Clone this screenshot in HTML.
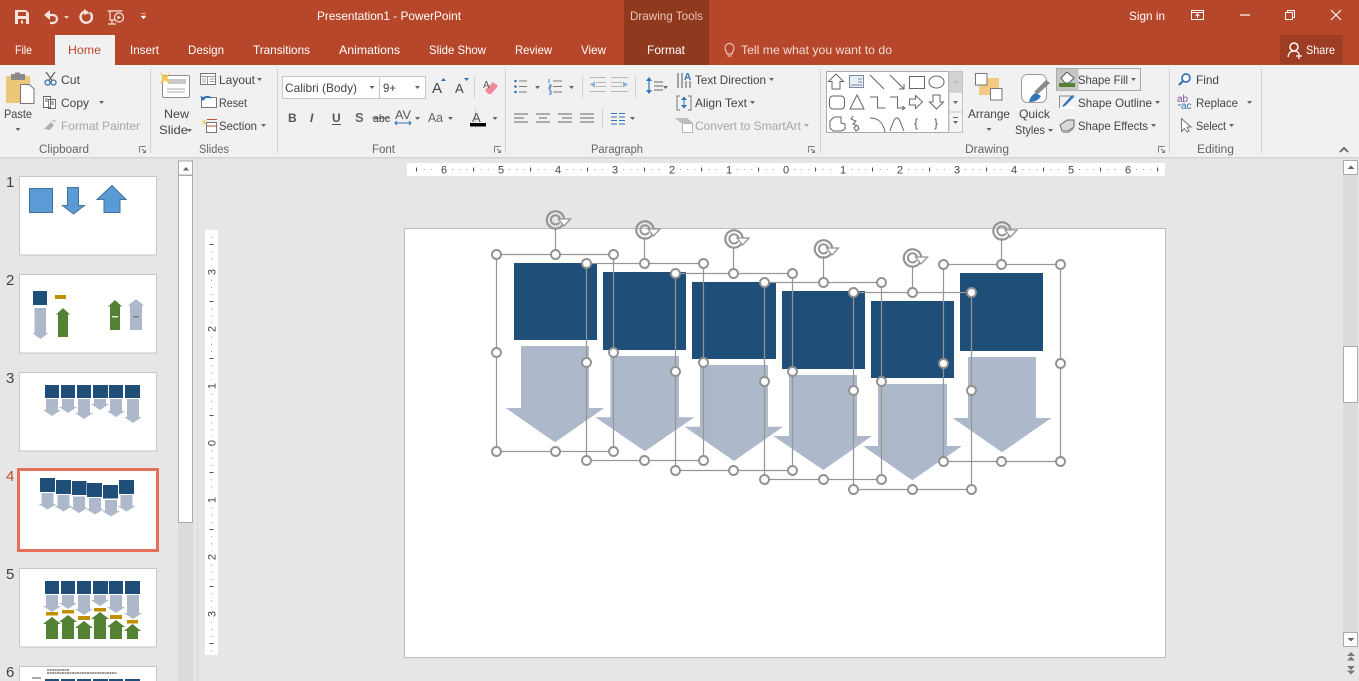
<!DOCTYPE html>
<html><head><meta charset="utf-8"><title>PowerPoint</title>
<style>
html,body{margin:0;padding:0;width:1359px;height:681px;overflow:hidden;background:#e6e6e6}
svg{display:block}
text{font-family:"Liberation Sans",sans-serif;font-size:12px;fill:#444}
.w text,text.w{fill:#fff}
.g{fill:#666;font-size:11.5px}
.d{fill:#a6a6a6}
.h{fill:#fff;stroke:#919191;stroke-width:1.9}
.b{fill:none;stroke:#959595;stroke-width:1.2}
.s{fill:none;stroke:#666;stroke-width:1}
.r{fill:#1f4e79}
.a{fill:#adb9ca}
.sep{stroke:#d2d2d2;stroke-width:1}
.ln{stroke:#666;stroke-width:1}
</style></head><body>
<svg width="1359" height="681" viewBox="0 0 1359 681" xmlns="http://www.w3.org/2000/svg">
<defs>
<path id="c" d="M0 0h5l-2.500 3z" fill="#666"/>
<g id="rh" fill="none" stroke="#959595">
<path d="M7.300 4.700A8.700 8.700 0 1 1 8.600 -1.500" stroke-width="2.200"/>
<path d="M3.900 2.300A4.600 4.600 0 1 1 4.400 -1.500" stroke-width="2"/>
<path d="M3 -1L15 -1L8.500 6Z" fill="#fff" stroke-width="1.300"/>
</g>
</defs>

<!-- backgrounds -->
<rect width="1359" height="681" fill="#e6e6e6"/>
<rect width="1359" height="65" fill="#b7472a"/>
<rect x="624" width="85" height="65" fill="#8f3a1f"/>
<rect x="55" y="35" width="60" height="30" fill="#f1f1f1"/>
<rect x="1280" y="35" width="63" height="29" fill="#9c3d24"/>
<rect y="65" width="1359" height="92" fill="#f1f1f1"/>
<rect y="157" width="1359" height="1.500" fill="#d4d4d4"/>

<!-- QAT -->
<path d="M15 10h11l3 3v11H15zM18 12v4h8v-4zM18 19v5h8v-5z" fill="#f6e4de" fill-rule="evenodd"/>
<rect x="21" y="20.500" width="2" height="3" fill="#f6e4de"/>
<g fill="none" stroke="#f6e4de" stroke-width="1.700">
<path d="M47 15h6a4 4 0 0 1 0 8h-3" stroke-width="2.200"/>
<path d="M90 12.800a5.700 5.700 0 1 1-5-1.300" stroke-width="2.400"/>
<path d="M107.500 11h15M110 11v9h4.500M116 24h-8M112 20.500v3.500" stroke-width="1.200"/>
<circle cx="119" cy="17.500" r="4.500" stroke-width="1.200"/>
</g>
<path d="M50 10L44 15L50 20z" fill="#f6e4de"/>
<path d="M84 9L90 13L84 15z" fill="#f6e4de"/>
<path d="M117.500 15.500l3.500 2-3.500 2z" fill="#f6e4de"/>
<path d="M64 16h5l-2.500 3z" fill="#eecfc5"/>
<path d="M141 13.500h5M141 16h5l-2.500 3z" fill="#fff" stroke="#fff" stroke-width=".5"/>

<!-- title text -->
<g class="w">
<text x="317" y="20" textLength="144" lengthAdjust="spacingAndGlyphs">Presentation1 - PowerPoint</text>
<text x="15" y="54" textLength="17" lengthAdjust="spacingAndGlyphs">File</text>
<text x="130" y="54" textLength="29" lengthAdjust="spacingAndGlyphs">Insert</text>
<text x="188" y="54" textLength="36" lengthAdjust="spacingAndGlyphs">Design</text>
<text x="253" y="54" textLength="57" lengthAdjust="spacingAndGlyphs">Transitions</text>
<text x="339" y="54" textLength="61" lengthAdjust="spacingAndGlyphs">Animations</text>
<text x="429" y="54" textLength="57" lengthAdjust="spacingAndGlyphs">Slide Show</text>
<text x="515" y="54" textLength="37" lengthAdjust="spacingAndGlyphs">Review</text>
<text x="581" y="54" textLength="25" lengthAdjust="spacingAndGlyphs">View</text>
<text x="647" y="54" textLength="38" lengthAdjust="spacingAndGlyphs">Format</text>
<text x="1129" y="20" textLength="36" lengthAdjust="spacingAndGlyphs">Sign in</text>
<text x="1306" y="54" textLength="29" lengthAdjust="spacingAndGlyphs">Share</text>
</g>
<text x="630" y="20" textLength="73" lengthAdjust="spacingAndGlyphs" style="fill:#ecc4b6">Drawing Tools</text>
<text x="741" y="54" textLength="151" lengthAdjust="spacingAndGlyphs" style="fill:#f3dcd4">Tell me what you want to do</text>
<text x="68" y="54" textLength="33" lengthAdjust="spacingAndGlyphs" style="fill:#b7472a">Home</text>
<path d="M727 54c0-2-2-3-2-6a4.500 4.500 0 0 1 9 0c0 3-2 4-2 6zM727.500 56h4" fill="none" stroke="#f3dcd4" stroke-width="1"/>

<!-- window controls -->
<g fill="none" stroke="#fff" stroke-width="1">
<path d="M1191.500 10.500h12v9h-12zM1191.500 12.500h12M1197.500 18v-4M1195.500 16l2-2 2 2"/>
<path d="M1240 15h10" stroke-width="1.200"/>
<path d="M1285.500 12.500h7v7h-7zM1287.500 12.500v-2h7v7h-2"/>
<path d="M1331 10l10 10M1341 10l-10 10" stroke-width="1.100"/>
<circle cx="1294" cy="47" r="4" stroke-width="1.500"/>
<path d="M1288 57c.5-4 3-6 6-6s4 1 5 3M1296 56h6M1299 53v6" stroke-width="1.300"/>
</g>

<!-- group separators -->
<g class="sep">
<path d="M150.500 69v84M277.500 69v84M505.500 69v84M820.500 69v84M1169.500 69v84M1261.500 69v84"/>
<path d="M474.500 76v22M475.500 108v20M582.500 76v22M635.500 76v22M602.500 108v20"/>
</g>

<!-- clipboard group -->
<rect x="6" y="76" width="24" height="27" rx="1" fill="#ecc779"/>
<rect x="11" y="74" width="14" height="6" fill="#8a8a8a"/>
<rect x="15" y="72.500" width="5" height="3" fill="#8a8a8a"/>
<path d="M20.500 84.500h9l4.500 4.500v14.500H20.500z" fill="#fff" stroke="#777"/>
<text x="4" y="118" textLength="28" lengthAdjust="spacingAndGlyphs">Paste</text>
<use href="#c" x="15.500" y="128"/>
<g fill="none" stroke="#3a74b0" stroke-width="1.300"><circle cx="47.500" cy="82.500" r="2.500"/><circle cx="53.500" cy="82.500" r="2.500"/></g>
<path d="M46 72l6.500 9M55 72l-6.500 9" stroke="#666" stroke-width="1.300"/>
<text x="61" y="84" textLength="19" lengthAdjust="spacingAndGlyphs">Cut</text>
<path d="M43.500 96.500h7v11h-7zM48.500 99.500h7v9h-7zM50 102h4M50 104h4M45 99h3M45 101h3" fill="#fff" stroke="#666" stroke-width=".9"/>
<text x="61" y="107" textLength="28" lengthAdjust="spacingAndGlyphs">Copy</text>
<use href="#c" x="99" y="101"/>
<path d="M44 129l7-7 3 3-4 5z" fill="#b0b0b0"/><path d="M51 120l4 3 1-3z" fill="#c8c8c8"/>
<text x="61" y="130" textLength="79" lengthAdjust="spacingAndGlyphs" class="d">Format Painter</text>
<text x="39" y="153" textLength="50" lengthAdjust="spacingAndGlyphs" class="g">Clipboard</text>
<g id="launch" fill="none" stroke="#777" stroke-width=".9"><path d="M139.500 146.500h6M139.500 146.500v6"/><path d="M142 149l3.500 3.500M145.500 150v2.500h-2.500"/></g>

<!-- slides group -->
<rect x="162.500" y="75.500" width="27" height="22" rx="1" fill="#fff" stroke="#8f8f8f"/>
<rect x="168" y="79" width="18" height="5" fill="#c9c9c9"/>
<path d="M167 89h18M167 92h18" stroke="#a8a8a8"/>
<path d="M160 72l5.500 4.500 4.500-4.500-2.500 6 2.500 6-5-3.500-5 3.500 2.500-6z" fill="#f2c94f"/>
<text x="164" y="118" textLength="25" lengthAdjust="spacingAndGlyphs">New</text>
<text x="159" y="134" textLength="29" lengthAdjust="spacingAndGlyphs">Slide</text>
<use href="#c" x="187" y="129"/>
<rect x="200.500" y="73.500" width="15" height="11" fill="#fff" stroke="#777"/><path d="M200.500 76.500h15M207.500 76.500v8M209.500 79h5M209.500 81.500h5" stroke="#999" fill="none"/><rect x="202" y="78" width="4" height="5" fill="#c8d8e8"/>
<text x="219" y="84" textLength="36" lengthAdjust="spacingAndGlyphs">Layout</text><use href="#c" x="257" y="78"/>
<rect x="201.500" y="97.500" width="15" height="10" fill="#fff" stroke="#777"/><path d="M202 100a6 6 0 0 1 9-2" fill="none" stroke="#2f75b5" stroke-width="1.800"/><path d="M200 96l3 5 3-3z" fill="#2f75b5"/>
<text x="219" y="107" textLength="28" lengthAdjust="spacingAndGlyphs">Reset</text>
<path d="M202 119l2 2 2-2-1 3 1 3-2-1.500-2 1.500 1-3z" fill="#f2c94f"/>
<rect x="206.500" y="122.500" width="10" height="10" fill="#fff" stroke="#777"/><path d="M207 119.500h10M207 126h10" stroke="#c0552f"/>
<text x="219" y="130" textLength="38" lengthAdjust="spacingAndGlyphs">Section</text><use href="#c" x="261" y="124"/>
<text x="199" y="153" textLength="30" lengthAdjust="spacingAndGlyphs" class="g">Slides</text>

<!-- font group -->
<rect x="282.500" y="76.500" width="143" height="22" fill="#fff" stroke="#c6c6c6"/>
<path d="M379.500 76v23" stroke="#c6c6c6"/>
<text x="285" y="92" textLength="72" lengthAdjust="spacingAndGlyphs">Calibri (Body)</text><use href="#c" x="369.500" y="86"/>
<text x="383" y="92" textLength="13" lengthAdjust="spacingAndGlyphs">9+</text><use href="#c" x="415" y="86"/>
<text x="432" y="93" style="font-size:15px">A</text><path d="M441 81h5l-2.500-3z" fill="#2f75b5"/>
<text x="455" y="93" style="font-size:13px">A</text><path d="M464 78h5l-2.500 3z" fill="#2f75b5"/>
<path d="M485 90l8-8 5 4-7 8h-3z" fill="#ee8a9a"/><text x="483" y="88" style="font-size:10px;fill:#555">A</text>
<text x="288" y="122" style="font-weight:bold;fill:#555">B</text>
<text x="310" y="122" style="font-style:italic;fill:#555;font-weight:bold">I</text>
<text x="332" y="122" style="font-weight:bold;fill:#555">U</text><path d="M332 124.500h9" stroke="#555"/>
<text x="355" y="122" style="font-weight:bold;fill:#666;font-size:13px">S</text>
<text x="373" y="122" textLength="17" lengthAdjust="spacingAndGlyphs" style="font-size:11px">abc</text><path d="M372 118h18" stroke="#555"/>
<text x="395" y="119" textLength="16" lengthAdjust="spacingAndGlyphs" style="fill:#555">AV</text><path d="M395 123h16M397 121l-2 2 2 2M409 121l2 2-2 2" fill="none" stroke="#2f75b5"/>
<use href="#c" x="415" y="117"/>
<text x="428" y="122" textLength="15" lengthAdjust="spacingAndGlyphs" style="font-size:13px;fill:#666">Aa</text>
<use href="#c" x="448" y="117"/>
<text x="472" y="122" style="font-size:13px;fill:#555">A</text><rect x="470" y="123" width="16" height="3.500" fill="#000"/>
<use href="#c" x="492.500" y="117"/>
<text x="372" y="153" textLength="23" lengthAdjust="spacingAndGlyphs" class="g">Font</text>
<use href="#launch" x="355" y="0"/>

<!-- paragraph -->
<g fill="#2f75b5"><circle cx="515.500" cy="81" r="1.300"/><circle cx="515.500" cy="86.500" r="1.300"/><circle cx="515.500" cy="92" r="1.300"/></g>
<path d="M519 81h8M519 86.500h8M519 92h8M553 81h9M553 86.500h9M553 92h9" stroke="#777"/>
<use href="#c" x="535" y="86"/><use href="#c" x="569" y="86"/>
<path d="M549 79v4M549 85h2v2h-2v2h2M549 91h2v3h-2" stroke="#2f75b5" fill="none" stroke-width=".9"/>
<path d="M590 77.500h16M596 82.500h10M596 86.500h10M590 91.500h16M611 77.500h17M611 82.500h11M611 86.500h11M611 91.500h17" stroke="#b9b9b9"/>
<path d="M590 84.500l5-3v6zM628 84.500l-5-3v6z" fill="#8ab0d5"/>
<path d="M649 78v15" stroke="#2f75b5" stroke-width="1.200"/><path d="M646 81l3-4 3 4zM646 90l3 4 3-4z" fill="#2f75b5"/>
<path d="M654 82h9M654 86h9M654 90h9" stroke="#666"/><use href="#c" x="663" y="86"/>
<path d="M514 114h14M514 118h10M514 122h14M536 114h14M539 118h8M536 122h14M558 114h14M562 118h10M558 122h14M580 114h14M580 118h14M580 122h14" stroke="#666"/>
<path d="M611 113.500h6M619 113.500h6M611 117h6M619 117h6M611 120.500h6M619 120.500h6M611 124h6M619 124h6" stroke="#2f75b5"/>
<use href="#c" x="630" y="117"/>
<text x="591" y="153" textLength="52" lengthAdjust="spacingAndGlyphs" class="g">Paragraph</text>
<use href="#launch" x="669" y="0"/>
<path d="M678 73v15M682 73v15M686 81v7M690 81v7" stroke="#555"/>
<text x="684" y="80" style="font-size:10px;fill:#2f75b5;font-weight:bold">A</text>
<text x="695" y="84" textLength="71" lengthAdjust="spacingAndGlyphs">Text Direction</text><use href="#c" x="769" y="78"/>
<path d="M680 96h-3v14h3M688 96h3v14h-3" fill="none" stroke="#777"/><path d="M684 97v10" stroke="#2f75b5"/><path d="M681 100l3-3.500 3 3.500zM681 105l3 3.500 3-3.500z" fill="#2f75b5"/>
<text x="695" y="107" textLength="52" lengthAdjust="spacingAndGlyphs">Align Text</text><use href="#c" x="750" y="101"/>
<path d="M675 118h12l6 5h-12z" fill="#bdbdbd"/><rect x="682.500" y="123.500" width="10" height="9" fill="#fff" stroke="#b5b5b5"/>
<text x="695" y="130" textLength="106" lengthAdjust="spacingAndGlyphs" class="d">Convert to SmartArt</text><use href="#c" x="804" y="124" opacity=".5"/>

<!-- shape gallery -->
<rect x="826.500" y="71.500" width="122" height="61" fill="#fff" stroke="#ababab"/>
<rect x="949" y="71.500" width="13.500" height="20.500" fill="#d2d2d2" stroke="#c4c4c4"/>
<rect x="949" y="92" width="13.500" height="20" fill="#f4f4f4" stroke="#c4c4c4"/>
<rect x="949" y="112" width="13.500" height="20.500" fill="#f4f4f4" stroke="#c4c4c4"/>
<path d="M953 83h5l-2.500-3z" fill="#bbb"/><use href="#c" x="953" y="101"/>
<path d="M953 117.500h5" stroke="#666"/><use href="#c" x="953" y="121"/>
<g class="s">
<path d="M836 74l7.500 7.500H840V89h-8v-7.500h-3.500z"/>
<rect x="849.500" y="75.500" width="14" height="12" fill="#eaf0f8" stroke="#7a8aa0"/><path d="M858 79h4M858 82h4M851 85h11" stroke="#7a8aa0"/>
<path d="M870 75l14 14M890 75l14 14M904 84v5h-5"/>
<rect x="909.500" y="76.500" width="15" height="12"/>
<ellipse cx="936.500" cy="82" rx="7.500" ry="6"/>
<rect x="829.500" y="96" width="15" height="13" rx="3.500"/>
<path d="M857 95l7 14h-14z"/>
<path d="M870 97h7.500v11h8"/>
<path d="M890 97h7.500v11h7M902 106l3 2-3 2"/>
<path d="M909.500 99h6v-3.500l7 6.500-7 6.500V105h-6z"/>
<path d="M933 95h7v7h3.500l-7 7-7-7h3.500z"/>
<path d="M830 121l4-4h7v6l4 1v5l-4 2h-8l-3-3z"/>
<path d="M853 116l-2 3 5 2-3 3 5 2 1 3-3 2-2-3 3-3"/>
<path d="M870 118c8 0 13 4 15 14"/>
<path d="M890 131c2-6 4-13 7-13s4 7 7 13"/>
</g>
<text x="914" y="127" style="font-size:12px;fill:#555">{</text>
<text x="934" y="127" style="font-size:12px;fill:#555">}</text>

<!-- arrange / quick styles -->
<rect x="979" y="78" width="20" height="17" fill="#f3c983"/>
<rect x="975.500" y="73.500" width="11.500" height="11.500" fill="#fff" stroke="#777"/>
<rect x="990.500" y="88.500" width="11.500" height="11.500" fill="#fff" stroke="#777"/>
<text x="968" y="118" textLength="42" lengthAdjust="spacingAndGlyphs">Arrange</text><use href="#c" x="986.500" y="128"/>
<rect x="1021.500" y="74.500" width="25" height="28" rx="6" fill="#fff" stroke="#999"/>
<path d="M1050 83l-12 11-4-2 12-12z" fill="#8a8a8a"/>
<path d="M1029 102c1-5 4-8 7-9l5 3c-2 4-6 6-12 6z" fill="#2f75b5"/>
<text x="1019" y="118" textLength="31" lengthAdjust="spacingAndGlyphs">Quick</text>
<text x="1015" y="134" textLength="30" lengthAdjust="spacingAndGlyphs">Styles</text><use href="#c" x="1048" y="129"/>
<rect x="1056.500" y="68.500" width="84" height="22" fill="#f1f1f1" stroke="#a9a9a9"/>
<rect x="1057" y="69" width="21.500" height="21.500" fill="#c4c6c4"/>
<path d="M1061 78l6-6 7 6-5 5h-4z" fill="#fff" stroke="#555"/>
<rect x="1059" y="83" width="16" height="4" fill="#548235"/>
<text x="1078" y="84" textLength="50" lengthAdjust="spacingAndGlyphs">Shape Fill</text><use href="#c" x="1131" y="78"/>
<path d="M1059.500 108v-12h15" fill="none" stroke="#8a8a8a"/><rect x="1060" y="106" width="15" height="3" fill="#fff"/>
<path d="M1063 105l9-10 2 2-9 9-3 1z" fill="#2f75b5"/>
<text x="1078" y="107" textLength="74" lengthAdjust="spacingAndGlyphs">Shape Outline</text><use href="#c" x="1155" y="101"/>
<path d="M1060 125l7-5h7v7l-6 4h-6z" fill="#d8d8d8" stroke="#666"/><path d="M1062 131h7l5-4v2l-5 4h-6z" fill="#aaa"/>
<text x="1078" y="130" textLength="70" lengthAdjust="spacingAndGlyphs">Shape Effects</text><use href="#c" x="1151" y="124"/>
<text x="965" y="153" textLength="44" lengthAdjust="spacingAndGlyphs" class="g">Drawing</text>
<use href="#launch" x="1019" y="0"/>

<!-- editing -->
<circle cx="1186" cy="78" r="4" fill="#fff" stroke="#2f75b5" stroke-width="1.700"/><path d="M1183 81l-4 4" stroke="#2f75b5" stroke-width="2.200"/>
<text x="1196" y="84" textLength="23" lengthAdjust="spacingAndGlyphs">Find</text>
<text x="1177" y="102" style="font-size:10px;fill:#8a4fa0">ab</text><text x="1181" y="109" style="font-size:10px;fill:#2f75b5">ac</text>
<path d="M1178 105h3" stroke="#2f75b5"/>
<text x="1196" y="107" textLength="42" lengthAdjust="spacingAndGlyphs">Replace</text><use href="#c" x="1247" y="101"/>
<path d="M1181.500 118.500v13l3-3 2.500 3.500 2-1-2-4h4z" fill="#fff" stroke="#777"/>
<text x="1196" y="130" textLength="30" lengthAdjust="spacingAndGlyphs">Select</text><use href="#c" x="1229" y="124"/>
<text x="1197" y="153" textLength="37" lengthAdjust="spacingAndGlyphs" class="g">Editing</text>
<path d="M1340 152l4-4 4 4" fill="none" stroke="#666" stroke-width="1.800"/>

<!-- left pane -->
<rect x="178" y="160" width="15" height="521" fill="#dcdcdc"/>
<rect x="178.500" y="161" width="14" height="14" fill="#fff" stroke="#ababab"/>
<path d="M183 170.500h6l-3-3.500z" fill="#666"/>
<rect x="178.500" y="175.500" width="14" height="347" fill="#fff" stroke="#ababab"/>
<path d="M197.500 158v523" stroke="#dadada"/>

<text x="6" y="187" style="font-size:15px">1</text>
<text x="6" y="285" style="font-size:15px">2</text>
<text x="6" y="383" style="font-size:15px">3</text>
<text x="6" y="481" style="font-size:15px;fill:#c9472f">4</text>
<text x="6" y="579" style="font-size:15px">5</text>
<text x="6" y="677" style="font-size:15px">6</text>
<g fill="#fff" stroke="#c6c6c6">
<rect x="19.500" y="176.500" width="137" height="78.500"/>
<rect x="19.500" y="274.500" width="137" height="78.500"/>
<rect x="19.500" y="372.500" width="137" height="78.500"/>
<rect x="19.500" y="568.500" width="137" height="78.500"/>
<rect x="19.500" y="666.500" width="137" height="30"/>
</g>
<rect x="18.500" y="469.500" width="139" height="81" fill="#fff" stroke="#e8705a" stroke-width="3"/>

<!-- thumb 1 -->
<rect x="29.500" y="188.500" width="23" height="24" fill="#5b9bd5" stroke="#41719c"/>
<path d="M67.500 187.500h11v18h6l-11 8.500-11-8.500h5z" fill="#5b9bd5" stroke="#41719c"/>
<path d="M112 185.500l14 14h-6v13h-16v-13h-7z" fill="#5b9bd5" stroke="#41719c"/>
<!-- thumb 2 -->
<rect x="33" y="291" width="14" height="14" class="r"/>
<path d="M34.500 308H46v25h2.500l-8 6-8-6h2z" class="a"/>
<rect x="55" y="295" width="11" height="4" fill="#bf9000"/>
<path d="M63 308l7 6.500h-2V337h-10v-22.500h-2z" fill="#548235"/>
<path d="M115 300l7 6.500h-2V330h-10v-23.500h-2z" fill="#548235"/>
<path d="M136 299l8 6.500h-2V330h-12v-24.500h-2z" class="a"/>
<rect x="112" y="316" width="6" height="1.500" fill="#dfe8d5"/><rect x="133" y="316" width="6" height="1.500" fill="#777"/>
<!-- thumb 3 -->
<g class="r"><rect x="45" y="385" width="14" height="13"/><rect x="61" y="385" width="14" height="13"/><rect x="77" y="385" width="14" height="13"/><rect x="93" y="385" width="15" height="13"/><rect x="109" y="385" width="14" height="13"/><rect x="125" y="385" width="15" height="13"/></g>
<g class="a">
<path d="M46 399h12v11h3l-9 6-9-6h3z"/><path d="M62 399h12v8h3l-9 6-9-6h3z"/><path d="M78 399h12v14h3l-9 6-9-6h3z"/><path d="M94 399h12v5h3l-9 6-9-6h3z"/><path d="M110 399h12v12h3l-9 6-9-6h3z"/><path d="M127 399h12v18h3l-9 6-9-6h3z"/>
</g>
<!-- thumb 4 -->
<g class="r"><rect x="40" y="478" width="15" height="14"/><rect x="56" y="480" width="15" height="14"/><rect x="72" y="481" width="14.500" height="14"/><rect x="87" y="483" width="15" height="14"/><rect x="103" y="485" width="15" height="13.500"/><rect x="119" y="480" width="15" height="14"/></g>
<g class="a">
<path d="M41.500 493h12v11h3l-9 5.500-9-5.500h3z"/><path d="M57.500 495h12v11h3l-9 5.500-9-5.500h3z"/><path d="M73 496.500h12v11h3l-9 5.500-9-5.500h3z"/><path d="M89 498h12v11h3l-9 5.500-9-5.500h3z"/><path d="M105 500h12v11h3l-9 5.500-9-5.500h3z"/><path d="M120.500 495h12v11h3l-9 5.500-9-5.500h3z"/>
</g>
<!-- thumb 5 -->
<g class="r"><rect x="45" y="581" width="14" height="13"/><rect x="61" y="581" width="14" height="13"/><rect x="77" y="581" width="14" height="13"/><rect x="93" y="581" width="15" height="13"/><rect x="109" y="581" width="14" height="13"/><rect x="125" y="581" width="15" height="13"/></g>
<g class="a">
<path d="M46 595h12v11h3l-9 6-9-6h3z"/><path d="M62 595h12v8h3l-9 6-9-6h3z"/><path d="M78 595h12v14h3l-9 6-9-6h3z"/><path d="M94 595h12v5h3l-9 6-9-6h3z"/><path d="M110 595h12v12h3l-9 6-9-6h3z"/><path d="M127 595h12v18h3l-9 6-9-6h3z"/>
</g>
<g fill="#bf9000"><rect x="46" y="612" width="12" height="3.500"/><rect x="62" y="610" width="12" height="3.500"/><rect x="78" y="616" width="12" height="4"/><rect x="94" y="608" width="12" height="3.500"/><rect x="110" y="615" width="12" height="4"/><rect x="127" y="620" width="11" height="3.500"/></g>
<g fill="#548235">
<path d="M52 617l9 7h-3v15H46v-15h-3z"/><path d="M68 615l9 7h-3v17H62v-17h-3z"/><path d="M84 621l9 7h-3v11H78v-11h-3z"/><path d="M100 612l9 7h-3v20H94v-20h-3z"/><path d="M116 620l9 7h-3v12h-12v-12h-3z"/><path d="M132.500 624l8.500 7h-3v8h-11v-8h-3z"/>
</g>
<!-- thumb 6 -->
<path d="M47 670h22M47 673h70" stroke="#333" stroke-width="1" stroke-dasharray="2 .5"/>
<path d="M32 678h9" stroke="#555"/>
<g class="r"><rect x="45" y="679" width="14" height="2"/><rect x="61" y="679" width="14" height="2"/><rect x="77" y="679" width="14" height="2"/><rect x="93" y="679" width="15" height="2"/><rect x="109" y="679" width="14" height="2"/><rect x="125" y="679" width="15" height="2"/></g>

<!-- rulers -->
<rect x="407" y="163" width="758" height="13" fill="#fff"/>
<rect x="205" y="230" width="13" height="425" rx="1" fill="#fff"/>
<path d="M416.500 169.500H1165" stroke="#999" stroke-width="1" stroke-dasharray="1 6.125"/>
<g stroke="#555"><path d="M416.500 167.500v4M473.500 167.500v4M530.500 167.500v4M587.500 167.500v4M644.500 167.500v4M701.500 167.500v4M758.500 167.500v4M815.500 167.500v4M872.500 167.500v4M929.500 167.500v4M986.500 167.500v4M1043.500 167.500v4M1100.500 167.500v4M1157.500 167.500v4"/></g>
<rect x="438" y="164" width="13" height="11" fill="#fff"/><rect x="495" y="164" width="13" height="11" fill="#fff"/><rect x="552" y="164" width="13" height="11" fill="#fff"/><rect x="609" y="164" width="13" height="11" fill="#fff"/><rect x="666" y="164" width="13" height="11" fill="#fff"/><rect x="723" y="164" width="13" height="11" fill="#fff"/><rect x="780" y="164" width="13" height="11" fill="#fff"/><rect x="837" y="164" width="13" height="11" fill="#fff"/><rect x="894" y="164" width="13" height="11" fill="#fff"/><rect x="951" y="164" width="13" height="11" fill="#fff"/><rect x="1008" y="164" width="13" height="11" fill="#fff"/><rect x="1065" y="164" width="13" height="11" fill="#fff"/><rect x="1122" y="164" width="13" height="11" fill="#fff"/>
<g text-anchor="middle">
<text x="444" y="173.500" style="font-size:11px">6</text><text x="501" y="173.500" style="font-size:11px">5</text><text x="558" y="173.500" style="font-size:11px">4</text><text x="615" y="173.500" style="font-size:11px">3</text><text x="672" y="173.500" style="font-size:11px">2</text><text x="729" y="173.500" style="font-size:11px">1</text><text x="786" y="173.500" style="font-size:11px">0</text><text x="843" y="173.500" style="font-size:11px">1</text><text x="900" y="173.500" style="font-size:11px">2</text><text x="957" y="173.500" style="font-size:11px">3</text><text x="1014" y="173.500" style="font-size:11px">4</text><text x="1071" y="173.500" style="font-size:11px">5</text><text x="1128" y="173.500" style="font-size:11px">6</text>
</g>
<path d="M211.500 237V655" stroke="#999" stroke-width="1" stroke-dasharray="1 6.125"/>
<g stroke="#555"><path d="M209.500 244.500h4M209.500 301.500h4M209.500 358.500h4M209.500 415.500h4M209.500 472.500h4M209.500 529.500h4M209.500 586.500h4M209.500 643.500h4"/></g>
<rect x="206" y="266" width="11" height="13" fill="#fff"/><rect x="206" y="323" width="11" height="13" fill="#fff"/><rect x="206" y="380" width="11" height="13" fill="#fff"/><rect x="206" y="437" width="11" height="13" fill="#fff"/><rect x="206" y="494" width="11" height="13" fill="#fff"/><rect x="206" y="551" width="11" height="13" fill="#fff"/><rect x="206" y="608" width="11" height="13" fill="#fff"/>
<g text-anchor="middle">
<text transform="translate(215.500,272) rotate(-90)" style="font-size:11px">3</text>
<text transform="translate(215.500,329) rotate(-90)" style="font-size:11px">2</text>
<text transform="translate(215.500,386) rotate(-90)" style="font-size:11px">1</text>
<text transform="translate(215.500,443) rotate(-90)" style="font-size:11px">0</text>
<text transform="translate(215.500,500) rotate(-90)" style="font-size:11px">1</text>
<text transform="translate(215.500,557) rotate(-90)" style="font-size:11px">2</text>
<text transform="translate(215.500,614) rotate(-90)" style="font-size:11px">3</text>
</g>

<!-- right scrollbar -->
<rect x="1343" y="160" width="15" height="480" fill="#dcdcdc"/>
<rect x="1343.500" y="160.500" width="14" height="14" fill="#fff" stroke="#ababab"/>
<path d="M1347.500 169h7l-3.500-3.500z" fill="#666"/>
<rect x="1343.500" y="346.500" width="14" height="56" fill="#fff" stroke="#ababab"/>
<rect x="1343.500" y="632.500" width="14" height="14" fill="#fff" stroke="#ababab"/>
<path d="M1347.500 638h7l-3.500 3.500z" fill="#666"/>
<path d="M1347 656h8l-4-4zM1347 660.500h8l-4-4z" fill="#777"/>
<path d="M1347 670h8l-4 4zM1347 674.500h8l-4 4z" fill="#777" transform="translate(0,-4)"/>

<!-- slide -->
<rect x="404.500" y="228.500" width="761" height="429" fill="#fff" stroke="#bdbdbd"/>

<!-- shapes -->
<g class="r">
<rect x="514" y="263" width="83" height="77"/>
<rect x="603" y="272" width="83" height="78"/>
<rect x="692" y="282" width="84" height="77"/>
<rect x="782" y="291" width="83" height="78"/>
<rect x="871" y="301" width="83" height="77"/>
<rect x="960" y="273" width="83" height="78"/>
</g>
<g class="a">
<path d="M521 346h68v62h15.300L555 442.300 505.700 408H521z"/>
<path d="M610.500 356H679v61.300h15.300L645 451.300 595.300 417.300H610.500z"/>
<path d="M700 365h68v61.700h15L734 461l-49.300-34.300H700z"/>
<path d="M789 375h68v61h15l-48.700 34-50-34H789z"/>
<path d="M878 384h69v62h15l-49.700 34.300L863 446h15z"/>
<path d="M968 357h68v61h15.300L1002 452.300 952.700 418H968z"/>
</g>

<!-- selection boxes -->
<g class="b">
<rect x="496.500" y="254.500" width="117" height="197"/>
<rect x="586.500" y="263.500" width="117" height="197"/>
<rect x="675.500" y="273.500" width="117" height="197"/>
<rect x="764.500" y="282.500" width="117" height="197"/>
<rect x="853.500" y="292.500" width="118" height="197"/>
<rect x="943.500" y="264.500" width="117" height="197"/>
<path d="M555.500 254v-26M644.500 263v-26M733.500 273v-26M823.500 282v-26M912.500 292v-26M1001.500 264v-26"/>
</g>
<use href="#rh" x="555.500" y="220"/>
<use href="#rh" x="645" y="230"/>
<use href="#rh" x="734" y="239"/>
<use href="#rh" x="823.500" y="249"/>
<use href="#rh" x="912.500" y="258"/>
<use href="#rh" x="1002" y="231"/>
<g class="h">
<circle cx="496.500" cy="254.500" r="4.500"/><circle cx="555.500" cy="254.500" r="4.500"/><circle cx="613.500" cy="254.500" r="4.500"/><circle cx="496.500" cy="352.500" r="4.500"/><circle cx="613.500" cy="352.500" r="4.500"/><circle cx="496.500" cy="451.500" r="4.500"/><circle cx="555.500" cy="451.500" r="4.500"/><circle cx="613.500" cy="451.500" r="4.500"/>
<circle cx="586.500" cy="263.500" r="4.500"/><circle cx="644.500" cy="263.500" r="4.500"/><circle cx="703.500" cy="263.500" r="4.500"/><circle cx="586.500" cy="362.500" r="4.500"/><circle cx="703.500" cy="362.500" r="4.500"/><circle cx="586.500" cy="460.500" r="4.500"/><circle cx="644.500" cy="460.500" r="4.500"/><circle cx="703.500" cy="460.500" r="4.500"/>
<circle cx="675.500" cy="273.500" r="4.500"/><circle cx="733.500" cy="273.500" r="4.500"/><circle cx="792.500" cy="273.500" r="4.500"/><circle cx="675.500" cy="371.500" r="4.500"/><circle cx="792.500" cy="371.500" r="4.500"/><circle cx="675.500" cy="470.500" r="4.500"/><circle cx="733.500" cy="470.500" r="4.500"/><circle cx="792.500" cy="470.500" r="4.500"/>
<circle cx="764.500" cy="282.500" r="4.500"/><circle cx="823.500" cy="282.500" r="4.500"/><circle cx="881.500" cy="282.500" r="4.500"/><circle cx="764.500" cy="381.500" r="4.500"/><circle cx="881.500" cy="381.500" r="4.500"/><circle cx="764.500" cy="479.500" r="4.500"/><circle cx="823.500" cy="479.500" r="4.500"/><circle cx="881.500" cy="479.500" r="4.500"/>
<circle cx="853.500" cy="292.500" r="4.500"/><circle cx="912.500" cy="292.500" r="4.500"/><circle cx="971.500" cy="292.500" r="4.500"/><circle cx="853.500" cy="390.500" r="4.500"/><circle cx="971.500" cy="390.500" r="4.500"/><circle cx="853.500" cy="489.500" r="4.500"/><circle cx="912.500" cy="489.500" r="4.500"/><circle cx="971.500" cy="489.500" r="4.500"/>
<circle cx="943.500" cy="264.500" r="4.500"/><circle cx="1001.500" cy="264.500" r="4.500"/><circle cx="1060.500" cy="264.500" r="4.500"/><circle cx="943.500" cy="363.500" r="4.500"/><circle cx="1060.500" cy="363.500" r="4.500"/><circle cx="943.500" cy="461.500" r="4.500"/><circle cx="1001.500" cy="461.500" r="4.500"/><circle cx="1060.500" cy="461.500" r="4.500"/>
</g>
</svg>
</body></html>
